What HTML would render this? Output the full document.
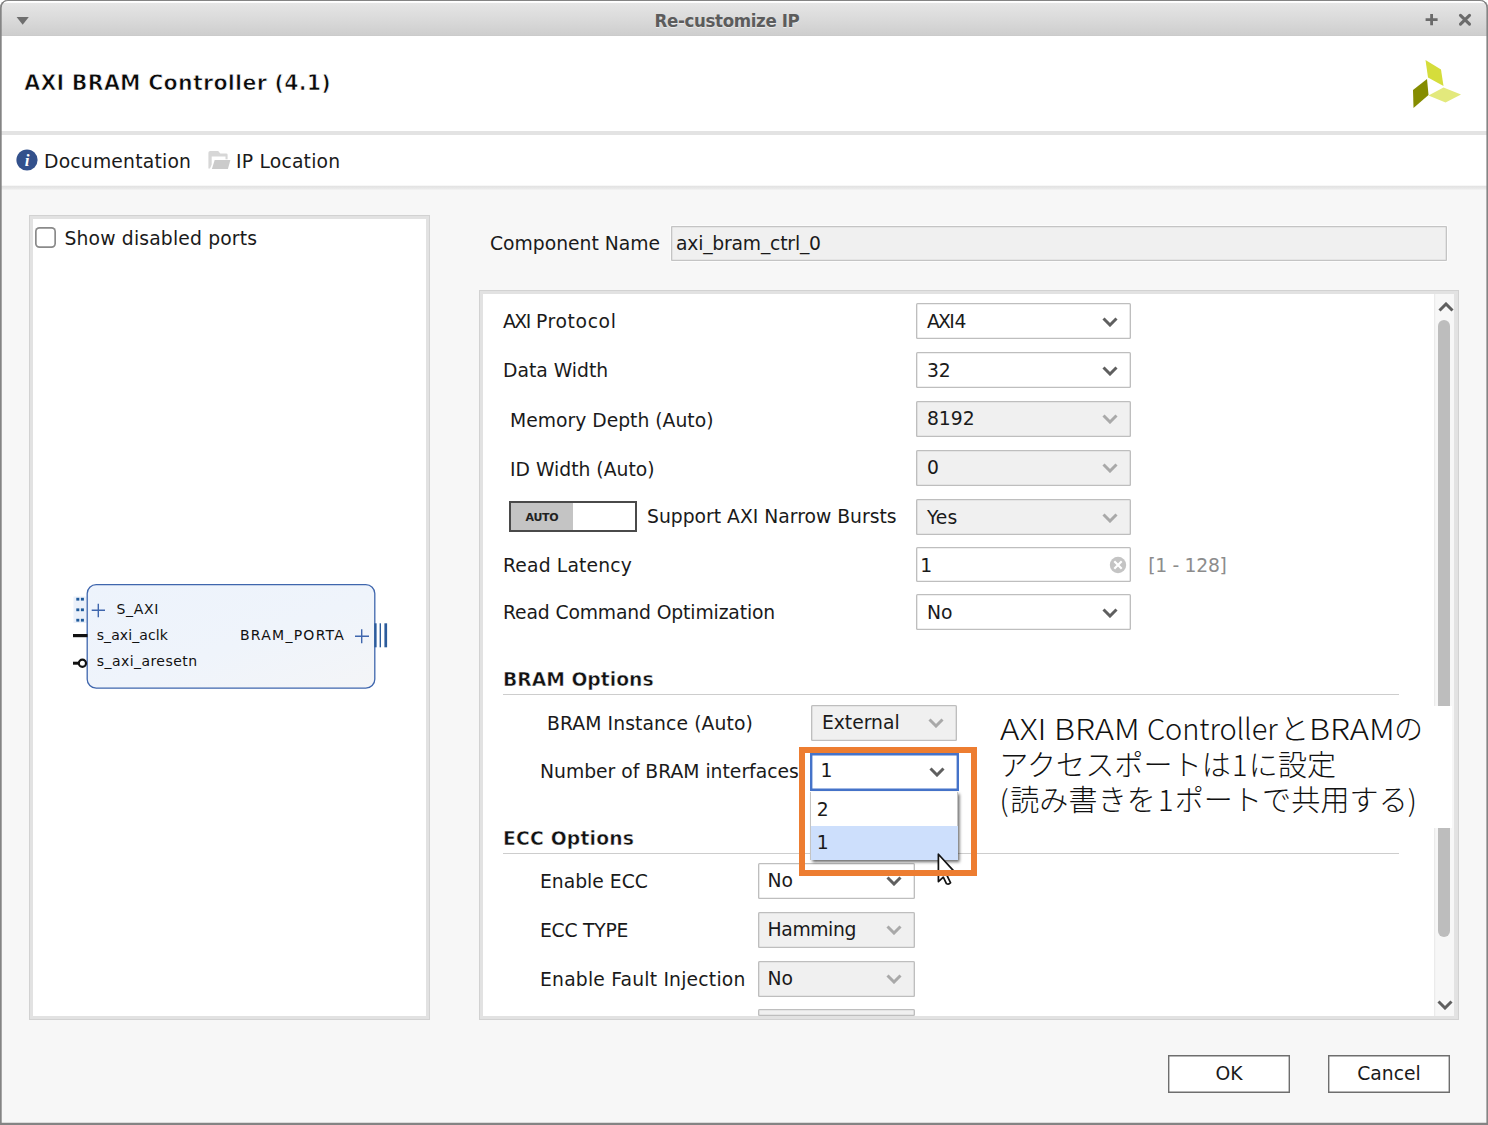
<!DOCTYPE html>
<html lang="ja">
<head>
<meta charset="utf-8">
<title>Re-customize IP</title>
<style>
html,body{margin:0;padding:0;background:#fff;}
body{width:1488px;height:1125px;overflow:hidden;position:relative;font-family:"DejaVu Sans","Liberation Sans",sans-serif;font-size:18.75px;color:#1a1a1a;}
#win{position:absolute;left:0;top:0;width:1488px;height:1125px;box-sizing:border-box;background:#f7f7f7;border-radius:9px 9px 0 0;overflow:hidden;}
#frame{position:absolute;left:0;top:0;width:1488px;height:1125px;box-sizing:border-box;box-shadow:inset 1.700px 0 0 #848484,inset -1.600px 0 0 #848484,inset 0 1.100px 0 #848484,inset 0 -2.300px 0 #848484;border-radius:8px 8px 0 0;z-index:50;pointer-events:none;}
#titlebar{position:absolute;left:0;top:0;width:1488px;height:36px;background:linear-gradient(#fff 0,#fff 2.400px,#e5e5e5 3.400px,#dbdbdb 18px,#cecece 35px,#c8c8c8 36px);}
#title{position:absolute;left:0;top:0;width:1454px;height:36px;line-height:42px;text-align:center;font-family:"DejaVu Sans Condensed","Liberation Sans",sans-serif;font-weight:bold;font-size:18.500px;letter-spacing:-0.360px;color:#5c5c5c;text-shadow:0 1px 0 rgba(255,255,255,.5);}
.abs{position:absolute;}
#header{position:absolute;left:0;top:36px;width:1488px;height:95px;background:#fff;}
#hname{position:absolute;left:24.200px;top:67.500px;font-weight:bold;font-size:20.600px;letter-spacing:0.250px;-webkit-text-stroke:0.750px #fff;line-height:30px;white-space:nowrap;color:#0a0a0a;}
#sep1{position:absolute;left:0;top:131px;width:1488px;height:4px;background:#e3e3e3;}
#toolbar{position:absolute;left:0;top:135px;width:1488px;height:50px;background:#fff;}
#sep2{position:absolute;left:0;top:185.500px;width:1488px;height:4.500px;background:linear-gradient(#e2e2e2,#e9e9e9 60%,#f3f3f3);}
.lbl{position:absolute;white-space:nowrap;line-height:24px;height:24px;}
.panel{position:absolute;box-sizing:border-box;background:#fff;border:4px solid #e2e2e2;outline:1px solid #d2d2d2;outline-offset:-1px;}
.combo{position:absolute;box-sizing:border-box;height:36px;box-shadow:inset 0 0 0 1.350px #bebebe;background:#fff;border-radius:1.500px;}
.combo.dis{background:#f0f0f0;}
.combo span{position:absolute;left:10.900px;top:6.500px;line-height:24px;white-space:nowrap;}
.combo svg{position:absolute;right:13.500px;top:13.600px;}
.sechead{margin-top:0.900px;position:absolute;-webkit-text-stroke:0.450px #fff;font-weight:bold;font-size:18.75px;line-height:24px;white-space:nowrap;color:#111;}
.secline{position:absolute;height:1.200px;background:#cdcdcd;}
.btn{position:absolute;box-sizing:border-box;box-shadow:inset 0 0 0 1.400px #6e6e6e;background:#fff;text-align:center;line-height:38.500px;height:38px;}
</style>
</head>
<body>
<div id="win">
  <div id="titlebar">
    <svg class="abs" style="left:14px;top:14px" width="18" height="14" viewBox="14 14 18 14"><path d="M16.600 16.900H28.800L22.700 24.800Z" fill="#6e6e6e"/></svg>
    <div id="title">Re-customize IP</div>
    <svg class="abs" style="left:1424px;top:12px" width="16" height="16" viewBox="1424 12 16 16"><path d="M1431.600 13.900V25.300M1425.600 19.650H1437.600" stroke="#6a6a6a" stroke-width="2.800" fill="none"/></svg>
    <svg class="abs" style="left:1456px;top:11px" width="18" height="18" viewBox="1456 11 18 18"><path d="M1460.500 15.400L1469.500 24.200M1469.500 15.400L1460.500 24.200" stroke="#6a6a6a" stroke-width="3.100" stroke-linecap="round" fill="none"/></svg>
  </div>
  <div id="header"></div>
  <div id="hname">AXI BRAM Controller (4.1)</div>
  <svg class="abs" style="left:1408px;top:56px" width="60" height="56" viewBox="1408 56 60 56">
    <polygon points="1425.5,60 1441,69.5 1443.5,86 1428,77.5" fill="#d5dd3b"/>
    <polygon points="1427,79 1428.5,95 1413.5,108 1413,90" fill="#858c00"/>
    <polygon points="1443.5,87.5 1461,94.5 1445.5,102.5 1428.5,95.5" fill="#e3e97c"/>
  </svg>
  <div id="sep1"></div>
  <div id="toolbar"></div>
  <div id="sep2"></div>

  <!-- toolbar items -->
  <svg class="abs" style="left:16.450px;top:149.050px" width="22" height="22" viewBox="0 0 22 22"><circle cx="11" cy="11" r="10.600" fill="#33518c"/><text x="11" y="17" text-anchor="middle" font-family="Liberation Serif, serif" font-style="italic" font-weight="bold" font-size="17" fill="#fff">i</text></svg>
  <div class="lbl" style="left:44px;top:150.000px;letter-spacing:0.200px;">Documentation</div>
  <svg class="abs" style="left:206px;top:148px" width="28" height="24" viewBox="206 148 28 24"><path d="M208.400 152.800Q208.400 151 210.200 151H218.200L220.300 153.400H226.200Q227.600 153.400 227.600 154.800V159.300H225.500V156.400H211.700V164.500L210 168.400H208.400Z" fill="#d7d7d7"/><path d="M214.700 160H230.400L227.900 169H211.900Z" fill="#cbcbcb"/></svg>
  <div class="lbl" style="left:236px;top:150.000px;letter-spacing:0.200px;">IP Location</div>

  <!-- left panel -->
  <div class="panel" style="left:29px;top:215px;width:401px;height:805px;"></div>
  <div class="abs" style="left:35.200px;top:226.900px;width:21.200px;height:20.800px;box-sizing:border-box;box-shadow:inset 0 0 0 1.700px #8a8a8a;border-radius:4.500px;background:#fff;"></div>
  <div class="lbl" style="left:64.5px;top:227.250px;letter-spacing:0.160px;">Show disabled ports</div>


  <!-- block diagram -->
  <svg class="abs" style="left:60px;top:570px" width="345" height="130" viewBox="60 570 345 130" font-family="DejaVu Sans, Liberation Sans, sans-serif" font-size="14">
    <defs><linearGradient id="bg" x1="0" y1="0" x2="1" y2="1"><stop offset="0" stop-color="#edf3fc"/><stop offset="0.55" stop-color="#eff4fb"/><stop offset="1" stop-color="#f4f5f7"/></linearGradient></defs>
    <rect x="73.500" y="596.500" width="13" height="26.500" fill="#eaf0fa"/>
    <rect x="87.200" y="584.600" width="287.600" height="103.600" rx="9" ry="9" fill="url(#bg)" stroke="#3f66ad" stroke-width="1.300"/>
    <g fill="#1f5a9b">
      <rect x="76.300" y="597.800" width="3" height="2.800"/><rect x="80.900" y="597.800" width="3" height="2.800"/>
      <rect x="76.300" y="608.400" width="3" height="2.800"/><rect x="80.900" y="608.400" width="3" height="2.800"/>
      <rect x="76.300" y="618.800" width="3" height="2.800"/><rect x="80.900" y="618.800" width="3" height="2.800"/>
    </g>
    <path d="M91.700 610.300H105M98.300 603.800V617.200" stroke="#3f66ad" stroke-width="1.400" fill="none"/>
    <text x="116.500" y="613.900" fill="#111" letter-spacing="0.700">S_AXI</text>
    <rect x="73" y="634" width="14.500" height="3.200" fill="#111"/>
    <text x="96.700" y="640" fill="#111" letter-spacing="0.100">s_axi_aclk</text>
    <rect x="73" y="661.700" width="5" height="3" fill="#111"/>
    <circle cx="82.400" cy="663.300" r="3.600" fill="#fff" stroke="#111" stroke-width="2.200"/>
    <text x="96.700" y="666.200" fill="#111" letter-spacing="0.450">s_axi_aresetn</text>
    <text x="240" y="640" fill="#111" letter-spacing="1.250">BRAM_PORTA</text>
    <path d="M355 636.200H369M361.700 629.300V643.200" stroke="#3f66ad" stroke-width="1.400" fill="none"/>
    <rect x="374.300" y="623.300" width="2.300" height="24" fill="#2c5c9c"/>
    <rect x="379.600" y="623.300" width="1.400" height="24" fill="#2c5c9c"/>
    <rect x="384.400" y="623.300" width="2.700" height="24" fill="#2c5c9c"/>
  </svg>
  <!-- right -->
  <div class="lbl" style="left:490px;top:231.700px;">Component Name</div>
  <div class="abs" style="left:671px;top:225.600px;width:775.700px;height:35px;box-sizing:border-box;box-shadow:inset 0 0 0 1.300px #c4c4c4,0 0 0 1px rgba(255,255,255,.6);background:#f0f0f0;border-radius:1px;"></div>
  <div class="lbl" style="left:676px;top:231.700px;letter-spacing:-0.200px;">axi_bram_ctrl_0</div>

  <div class="panel" style="left:479px;top:290px;width:980px;height:730px;"></div>

  <!-- parameter rows -->
  <div class="lbl" style="left:503px;top:309.800px;"><span style="letter-spacing:-1.500px">AXI</span><span class="abs" style="left:33px;top:0;letter-spacing:0.620px">Protocol</span></div>
  <div class="combo" style="left:916px;top:303.400px;width:215px;"><span style="letter-spacing:-1.700px">AXI</span><span style="left:38.600px">4</span><svg width="16" height="10" viewBox="0 0 16 10"><path d="M1.5 1.5l6.5 6.5l6.5-6.5" fill="none" stroke="#5f5f5f" stroke-width="3"/></svg></div>
  <div class="lbl" style="left:503px;top:358.800px;">Data Width</div>
  <div class="combo" style="left:916px;top:352.400px;width:215px;"><span>32</span><svg width="16" height="10" viewBox="0 0 16 10"><path d="M1.5 1.5l6.5 6.5l6.5-6.5" fill="none" stroke="#5f5f5f" stroke-width="3"/></svg></div>
  <div class="lbl" style="left:510px;top:408.800px;">Memory Depth (Auto)</div>
  <div class="combo dis" style="left:916px;top:400.900px;width:215px;"><span>8192</span><svg width="16" height="10" viewBox="0 0 16 10"><path d="M1.5 1.5l6.5 6.5l6.5-6.5" fill="none" stroke="#a9a9a9" stroke-width="3"/></svg></div>
  <div class="lbl" style="left:510px;top:457.800px;">ID Width (Auto)</div>
  <div class="combo dis" style="left:916px;top:449.500px;width:215px;"><span>0</span><svg width="16" height="10" viewBox="0 0 16 10"><path d="M1.5 1.5l6.5 6.5l6.5-6.5" fill="none" stroke="#a9a9a9" stroke-width="3"/></svg></div>
  <div class="abs" style="left:509px;top:501px;width:128px;height:31px;box-sizing:border-box;border:2px solid #4a4a4a;background:#fff;"><div class="abs" style="left:0;top:0;width:62px;height:27px;background:#c4c4c4;text-align:center;line-height:30px;font-weight:bold;font-size:11px;color:#222;letter-spacing:-0.3px;">AUTO</div></div>
  <div class="lbl" style="left:647px;top:504.800px;">Support AXI Narrow Bursts</div>
  <div class="combo dis" style="left:916px;top:499px;width:215px;"><span>Yes</span><svg width="16" height="10" viewBox="0 0 16 10"><path d="M1.5 1.5l6.5 6.5l6.5-6.5" fill="none" stroke="#a9a9a9" stroke-width="3"/></svg></div>
  <div class="lbl" style="left:503px;top:553.800px;letter-spacing:0.150px;">Read Latency</div>
  <div class="combo" style="left:916px;top:547px;width:215px;height:35px;"><span style="left:4.200px">1</span></div>
  <svg class="abs" style="left:1109px;top:556px" width="18" height="18" viewBox="0 0 18 18"><circle cx="9" cy="9" r="8.2" fill="#c4c4c4"/><path d="M5.3 5.3l7.4 7.4M12.700 5.3l-7.4 7.4" stroke="#fff" stroke-width="2.2"/></svg>
  <div class="lbl" style="left:1148.200px;top:553.800px;color:#8c8c8c;letter-spacing:-0.300px;">[1 - 128]</div>
  <div class="lbl" style="left:503px;top:600.800px;letter-spacing:-0.130px;">Read Command Optimization</div>
  <div class="combo" style="left:916px;top:594.300px;width:215px;"><span>No</span><svg width="16" height="10" viewBox="0 0 16 10"><path d="M1.5 1.5l6.5 6.5l6.5-6.5" fill="none" stroke="#5f5f5f" stroke-width="3"/></svg></div>

  <div class="sechead" style="left:503px;top:667px;">BRAM Options</div>
  <div class="secline" style="left:503px;top:694px;width:896px;"></div>
  <div class="lbl" style="left:547px;top:711.800px;letter-spacing:0.100px;">BRAM Instance (Auto)</div>
  <div class="combo dis" style="left:811px;top:704.500px;width:146px;"><span>External</span><svg width="16" height="10" viewBox="0 0 16 10"><path d="M1.5 1.5l6.5 6.5l6.5-6.5" fill="none" stroke="#a9a9a9" stroke-width="3"/></svg></div>
  <div class="lbl" style="left:540px;top:759.800px;">Number of BRAM interfaces</div>

  <div class="sechead" style="left:503px;top:826px;letter-spacing:0.200px;">ECC Options</div>
  <div class="secline" style="left:503px;top:853px;width:896px;"></div>
  <div class="lbl" style="left:540px;top:869.800px;">Enable ECC</div>
  <div class="combo" style="left:758px;top:862.500px;width:157px;"><span style="left:9.600px">No</span><svg width="16" height="10" viewBox="0 0 16 10"><path d="M1.5 1.5l6.5 6.5l6.5-6.5" fill="none" stroke="#5f5f5f" stroke-width="3"/></svg></div>
  <div class="lbl" style="left:540px;top:918.800px;letter-spacing:-0.250px;">ECC TYPE</div>
  <div class="combo dis" style="left:758px;top:911.500px;width:157px;"><span style="left:9.600px;letter-spacing:-0.400px">Hamming</span><svg width="16" height="10" viewBox="0 0 16 10"><path d="M1.5 1.5l6.5 6.5l6.5-6.5" fill="none" stroke="#a9a9a9" stroke-width="3"/></svg></div>
  <div class="lbl" style="left:540px;top:967.800px;letter-spacing:0.200px;">Enable Fault Injection</div>
  <div class="combo dis" style="left:758px;top:960.500px;width:157px;"><span style="left:9.600px">No</span><svg width="16" height="10" viewBox="0 0 16 10"><path d="M1.5 1.5l6.5 6.5l6.5-6.5" fill="none" stroke="#a9a9a9" stroke-width="3"/></svg></div>
  <div class="combo dis" style="left:758px;top:1009px;width:157px;height:7px;"></div>

  <!-- scrollbar -->
  <div class="abs" style="left:1433.500px;top:294px;width:20px;height:722px;background:#f7f7f7;box-shadow:inset 1.200px 0 0 #ebebeb;"></div><div class="abs" style="left:1453.500px;top:292px;width:2px;height:726px;background:#e3e3e3;"></div>
  <svg class="abs" style="left:1437.600px;top:301.600px" width="16" height="10" viewBox="0 0 16 10"><path d="M1.5 8.5l6.5-6.5l6.5 6.5" fill="none" stroke="#5f5f5f" stroke-width="3"/></svg>
  <div class="abs" style="left:1438px;top:320px;width:12px;height:617px;border-radius:6px;background:#bdbdbd;"></div>
  <svg class="abs" style="left:1437px;top:1000px" width="16" height="10" viewBox="0 0 16 10"><path d="M1.5 1.5l6.5 6.5l6.5-6.5" fill="none" stroke="#5f5f5f" stroke-width="3"/></svg>

  <!-- annotation text box -->
  <div class="abs" id="anno" style="left:990px;top:706px;width:462px;height:122px;background:#fff;"></div>
  <div class="abs" id="annotxt" style="left:0;top:0;white-space:nowrap;font-family:'Noto Sans CJK JP','Liberation Sans',sans-serif;font-weight:300;font-size:29px;line-height:36px;color:#111;">
    <span class="abs" style="left:999.500px;top:708.600px;transform-origin:0 0;transform:scaleX(1.135);">AXI</span>
    <span class="abs" style="left:1054.200px;top:708.600px;transform-origin:0 0;transform:scaleX(1.127);">BRAM</span>
    <span class="abs" style="left:1147px;top:708.600px;letter-spacing:-0.100px;">Controller</span>
    <span class="abs" style="left:1280px;top:708.600px;">と</span>
    <span class="abs" style="left:1309.200px;top:708.600px;transform-origin:0 0;transform:scaleX(1.127);">BRAM</span>
    <span class="abs" style="left:1394px;top:708.600px;">の</span>
    <span class="abs" style="left:999.200px;top:745px;letter-spacing:0.150px;">アクセスポートは<span style="margin:0 1.200px 0 1px">1</span>に設定</span>
    <span class="abs" style="left:999.400px;top:780px;letter-spacing:0.150px;"><span style="margin-right:1.500px">(</span>読み書きを<span style="margin:0 1px 0 2px">1</span>ポートで共用する)</span>
  </div>

  <!-- open combo + dropdown -->
  <div class="combo" style="left:810px;top:752.800px;width:148.800px;height:38.400px;box-shadow:inset 0 0 0 2.400px #4573c9;border-radius:0;"><span style="left:10.600px;top:6.700px">1</span><svg style="right:14.200px;top:14px" width="16" height="10" viewBox="0 0 16 10"><path d="M1.5 1.500l6.5 6.5l6.5-6.5" fill="none" stroke="#5f5f5f" stroke-width="3"/></svg></div>
  <div class="abs" style="left:810.200px;top:791.700px;width:147.800px;height:68px;background:#fff;box-shadow:1.500px 2px 3px rgba(0,0,0,.6);border:1px solid #c4c4c4;border-top:none;box-sizing:border-box;">
    <div class="abs" style="left:0;top:0;width:146px;height:34px;line-height:35.500px;text-indent:5.500px;">2</div>
    <div class="abs" style="left:0;top:34.300px;width:146.800px;height:33.700px;line-height:33px;text-indent:5.500px;background:#cddffc;">1</div>
  </div>
  <!-- cursor -->
  <svg class="abs" style="left:930px;top:848px" width="30" height="42" viewBox="930 848 30 42"><path d="M938.400 854.200V881.600L943.300 877.200L946.400 883.600Q948.600 885 950.600 882.800L947.300 876.200L953.400 870.600Z" fill="#fff" stroke="#111" stroke-width="1.700" stroke-linejoin="round"/></svg>
  <!-- orange highlight -->
  <div class="abs" style="left:799px;top:747px;width:178px;height:128.800px;box-sizing:border-box;border:6px solid #ed7d31;"></div>

  <!-- buttons -->
  <div class="btn" style="left:1168px;top:1055px;width:122px;">OK</div>
  <div class="btn" style="left:1328px;top:1055px;width:122px;">Cancel</div>
</div>
<div id="frame"></div>
</body>
</html>
